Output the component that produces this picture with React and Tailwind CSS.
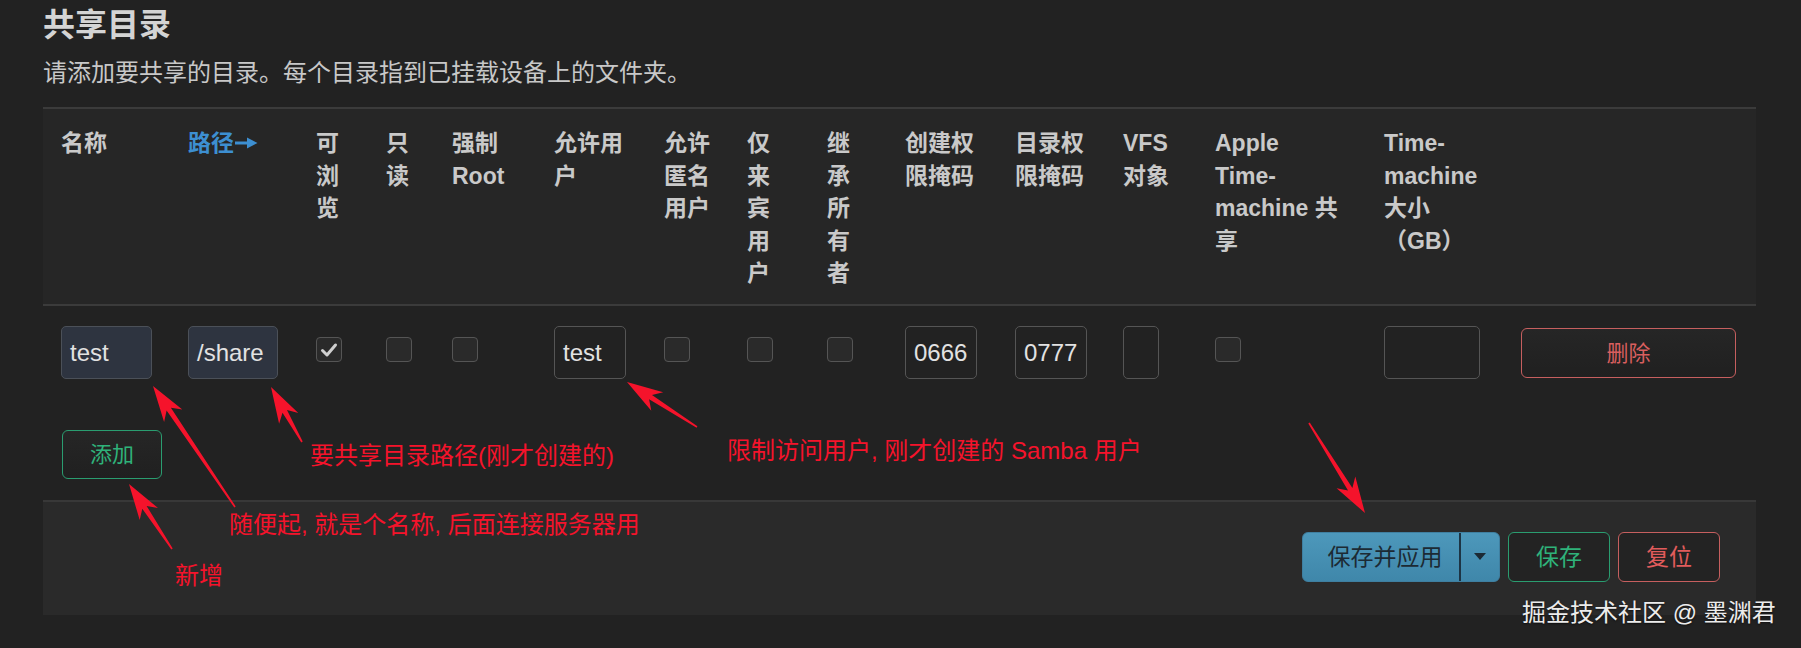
import React from "react";

const COLS =
  "grid grid-cols-[127px_128px_70px_66px_102px_110px_83px_80px_78px_110px_108px_92px_169px_137px_253px]";

function Arrow({ x1, y1, x2, y2 }) {
  const dx = x2 - x1;
  const dy = y2 - y1;
  const len = Math.hypot(dx, dy);
  const ux = dx / len;
  const uy = dy / len;
  const px = -uy;
  const py = ux;
  const headLen = 36;
  const headW = 11;
  const notch = 8;
  const bx = x2 - ux * headLen;
  const by = y2 - uy * headLen;
  const nx = x2 - ux * (headLen - notch);
  const ny = y2 - uy * (headLen - notch);
  const t0 = 0.8;
  const t1 = 2.6;
  const pts = [
    [x1 + px * t0, y1 + py * t0],
    [nx + px * t1, ny + py * t1],
    [bx + px * headW, by + py * headW],
    [x2, y2],
    [bx - px * headW, by - py * headW],
    [nx - px * t1, ny - py * t1],
    [x1 - px * t0, y1 - py * t0],
  ]
    .map((p) => p[0].toFixed(1) + "," + p[1].toFixed(1))
    .join(" ");
  return <polygon points={pts} fill="#f5132b" />;
}

function Checkbox({ checked }) {
  return (
    <div className="mt-[11px] flex h-[25px] w-[26px] items-center justify-center rounded-[4px] border-[1.5px] border-[#555] bg-[#2a2a2a]">
      {checked && (
        <svg width="18" height="16" viewBox="0 0 18 16">
          <path d="M2.5 8.5 L7 13 L15.5 3" fill="none" stroke="#cfcfcf" strokeWidth="3" strokeLinecap="round" strokeLinejoin="round" />
        </svg>
      )}
    </div>
  );
}

function Input({ value, w, blue }) {
  return (
    <div
      className={
        "flex h-[53px] items-center rounded-[5px] border-[1.5px] px-[8px] text-[24px] text-[#e2e2e2] " +
        w +
        (blue ? " border-[#4b5058] bg-[#2e3440]" : " border-[#555] bg-[#222]")
      }
    >
      {value}
    </div>
  );
}

const headers = [
  [["名称"]],
  [["路径"], true],
  [["可", "浏", "览"]],
  [["只", "读"]],
  [["强制", "Root"]],
  [["允许用", "户"]],
  [["允许", "匿名", "用户"]],
  [["仅", "来", "宾", "用", "户"]],
  [["继", "承", "所", "有", "者"]],
  [["创建权", "限掩码"]],
  [["目录权", "限掩码"]],
  [["VFS", "对象"]],
  [["Apple", "Time-", "machine 共", "享"]],
  [["Time-", "machine", "大小", "（GB）"]],
  [[""]],
];

export default function App() {
  return (
    <div className="relative h-[648px] w-[1801px] overflow-hidden bg-[#222222] font-['Liberation_Sans','Noto_Sans_CJK_SC',sans-serif]">
      <div className="w-[1756px] pl-[43px]">
        <h2 className="pt-[5px] text-[32px] font-bold leading-[40px] text-[#d4d4d4]">共享目录</h2>
        <p className="mt-[12px] text-[24px] leading-[32px] text-[#c8c8c8]">
          请添加要共享的目录。每个目录指到已挂载设备上的文件夹。
        </p>

        <div className="mt-[18px]">
          {/* header */}
          <div className={COLS + " h-[199px] border-y-2 border-[#3b3b3b] bg-[#262626]"}>
            {headers.map(([lines, blue], i) => (
              <div
                key={i}
                className={
                  "pl-[18px] pt-[18px] text-[23px] font-bold leading-[32.5px] " +
                  (blue ? "text-[#3d8fd1]" : "text-[#c9c9c9]")
                }
              >
                {lines.map((l, j) => (
                  <div key={j} className="flex items-center whitespace-nowrap">
                    {l}
                    {blue && (
                      <svg className="ml-[1px]" width="23" height="12" viewBox="0 0 23 12">
                        <path d="M0 4.5 H14 V7.5 H0 Z" fill="#3d8fd1" />
                        <path d="M12 0.5 L22.5 6 L12 11.5 Z" fill="#3d8fd1" />
                      </svg>
                    )}
                  </div>
                ))}
              </div>
            ))}
          </div>

          {/* row */}
          <div className={COLS + " items-start pt-[20px]"}>
            <div className="pl-[18px]">
              <Input value="test" w="w-[91px]" blue />
            </div>
            <div className="pl-[18px]">
              <Input value="/share" w="w-[90px]" blue />
            </div>
            <div className="pl-[18px]">
              <Checkbox checked />
            </div>
            <div className="pl-[18px]">
              <Checkbox />
            </div>
            <div className="pl-[18px]">
              <Checkbox />
            </div>
            <div className="pl-[18px]">
              <Input value="test" w="w-[72px]" />
            </div>
            <div className="pl-[18px]">
              <Checkbox />
            </div>
            <div className="pl-[18px]">
              <Checkbox />
            </div>
            <div className="pl-[18px]">
              <Checkbox />
            </div>
            <div className="pl-[18px]">
              <Input value="0666" w="w-[72px]" />
            </div>
            <div className="pl-[18px]">
              <Input value="0777" w="w-[72px]" />
            </div>
            <div className="pl-[18px]">
              <Input value="" w="w-[36px]" />
            </div>
            <div className="pl-[18px]">
              <Checkbox />
            </div>
            <div className="pl-[18px]">
              <Input value="" w="w-[96px]" />
            </div>
            <div className="pl-[18px] pt-[2px]">
              <button className="h-[50px] w-[215px] rounded-[6px] border-[1.5px] border-[#c65f5f] bg-gradient-to-b from-[#262626] to-[#202020] text-[22px] text-[#d95f5f]">
                删除
              </button>
            </div>
          </div>

          {/* add */}
          <div className="pl-[19px] pt-[51px] pb-[21px]">
            <button className="h-[49px] w-[100px] rounded-[6px] border-[1.5px] border-[#2a9d70] bg-gradient-to-b from-[#262626] to-[#202020] text-[22px] text-[#2fb27a]">
              添加
            </button>
          </div>

          {/* footer */}
          <div className="flex h-[115px] justify-end gap-[8px] border-t-2 border-[#383838] bg-[#2a2a2a] pr-[36px] pt-[30px]">
            <div className="flex h-[50px] w-[198px] overflow-hidden rounded-[6px] border border-[#3f7fa0] bg-gradient-to-b from-[#4d98bb] to-[#3f87aa]">
              <div className="flex flex-1 items-center justify-center pl-[8px] text-[23px] text-[#1c2a34]">
                保存并应用
              </div>
              <div className="w-[2px] bg-[#1d3444]" />
              <div className="flex w-[38px] items-center justify-center">
                <svg width="12" height="8" viewBox="0 0 12 8">
                  <path d="M0 0 L12 0 L6 7 Z" fill="#1c2a34" />
                </svg>
              </div>
            </div>
            <button className="h-[50px] w-[102px] rounded-[6px] border-[1.5px] border-[#2a9d70] bg-[#232323] text-[23px] text-[#2fb27a]">
              保存
            </button>
            <button className="h-[50px] w-[102px] rounded-[6px] border-[1.5px] border-[#c65f5f] bg-[#232323] text-[23px] text-[#e15c5c]">
              复位
            </button>
          </div>
        </div>
      </div>

      {/* annotations */}
      <svg className="pointer-events-none absolute left-0 top-0" width="1801" height="648">
        <Arrow x1={235} y1={507} x2={153} y2={386} />
        <Arrow x1={302} y1={442} x2={271} y2={387} />
        <Arrow x1={697} y1={427} x2={627} y2={382} />
        <Arrow x1={172} y1={549} x2={129} y2={484} />
        <Arrow x1={1309} y1={423} x2={1365} y2={513} />
      </svg>
      <div className="absolute left-[310px] top-[441px] whitespace-nowrap text-[24px] leading-[30px] text-[#f5132b]">
        要共享目录路径(刚才创建的)
      </div>
      <div className="absolute left-[727px] top-[436px] whitespace-nowrap text-[24px] leading-[30px] text-[#f5132b]">
        限制访问用户, 刚才创建的 Samba 用户
      </div>
      <div className="absolute left-[229px] top-[510px] whitespace-nowrap text-[24px] leading-[30px] text-[#f5132b]">
        随便起, 就是个名称, 后面连接服务器用
      </div>
      <div className="absolute left-[175px] top-[561px] whitespace-nowrap text-[24px] leading-[30px] text-[#f5132b]">
        新增
      </div>
      <div className="absolute left-[1522px] top-[598px] whitespace-nowrap text-[24px] leading-[30px] text-[#ececec] [text-shadow:0_1px_2px_rgba(0,0,0,0.6)]">
        掘金技术社区 @ 墨渊君
      </div>
    </div>
  );
}
